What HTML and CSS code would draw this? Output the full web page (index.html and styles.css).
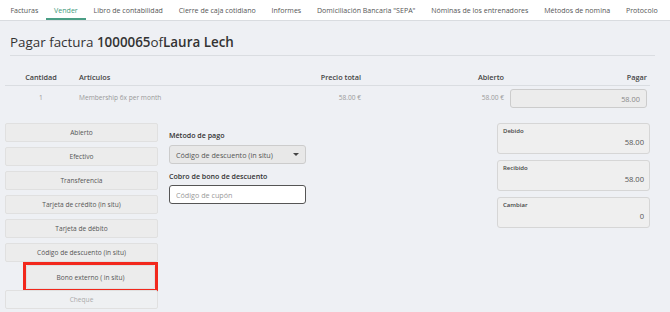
FILE: index.html
```
<!DOCTYPE html>
<html lang="es">
<head>
    <meta charset="UTF-8">
    <meta name="viewport" content="width=device-width, initial-scale=1.0">
    <title>Pagar factura</title>
    <link rel="stylesheet" href="styles.css">
</head>
<body>
    <nav class="tabs">
        <a class="tab">Facturas</a>
        <a class="tab active">Vender</a>
        <a class="tab">Libro de contabilidad</a>
        <a class="tab">Cierre de caja cotidiano</a>
        <a class="tab">Informes</a>
        <a class="tab">Domiciliación Bancaria "SEPA"</a>
        <a class="tab">Nóminas de los entrenadores</a>
        <a class="tab">Métodos de nomina</a>
        <a class="tab">Protocolo</a>
    </nav>

    <div class="page">
        <h1 class="title">Pagar factura <b>1000065</b>of<b>Laura Lech</b></h1>

        <div class="items">
            <div class="row head">
                <div class="c-qty">Cantidad</div>
                <div class="c-name">Artículos</div>
                <div class="c-num">Precio total</div>
                <div class="c-num">Abierto</div>
                <div class="c-num">Pagar</div>
            </div>
            <div class="row">
                <div class="c-qty">1</div>
                <div class="c-name">Membership 6x per month</div>
                <div class="c-num">58.00 €</div>
                <div class="c-num">58.00 €</div>
                <div class="c-pay"><input class="pay-input" type="text" value="58.00" disabled></div>
            </div>
        </div>

        <div class="payment">
            <div class="methods">
                <button class="method">Abierto</button>
                <button class="method">Efectivo</button>
                <button class="method">Transferencia</button>
                <button class="method">Tarjeta de crédito (in situ)</button>
                <button class="method">Tarjeta de débito</button>
                <button class="method">Código de descuento (in situ)</button>
                <div class="highlight">
                    <button class="method">Bono externo ( in situ)</button>
                </div>
                <button class="method faded">Cheque</button>
            </div>

            <div class="form">
                <label class="label">Método de pago</label>
                <div class="select">
                    <span>Código de descuento (in situ)</span>
                    <span class="caret"></span>
                </div>
                <label class="label">Cobro de bono de descuento</label>
                <input class="coupon" type="text" placeholder="Código de cupón">
            </div>

            <div class="totals">
                <div class="total">
                    <span class="total-label">Debido</span>
                    <span class="total-value">58.00</span>
                </div>
                <div class="total">
                    <span class="total-label">Recibido</span>
                    <span class="total-value">58.00</span>
                </div>
                <div class="total">
                    <span class="total-label">Cambiar</span>
                    <span class="total-value">0</span>
                </div>
            </div>
        </div>
    </div>
</body>
</html>
```

FILE: styles.css
```
body {
    margin: 0;
    font-family: "Open Sans", Arial, sans-serif;
    background-color: #eef0f4;
    color: #555;
}

/* Top tabs */
.tabs {
    display: flex;
    height: 20px;
    padding-left: 2.5px;
    background-color: #fff;
    border-bottom: 1px solid #d9dce0;
    overflow: hidden;
}

.tab {
    padding: 0 7.9px;
    font-size: 7.05px;
    line-height: 20px;
    color: #555;
    white-space: nowrap;
}

.tab.active {
    color: #3f9a7c;
    box-shadow: inset 0 -2px 0 #4a9e85;
}

/* Page */
.page {
    width: 645px;
    padding: 0 5px;
}

.title {
    margin: 0 -5px 0 5px;
    padding: 13px 0 5px;
    font-size: 13.4px;
    font-weight: 400;
    line-height: 16px;
    color: #333;
    border-bottom: 1px solid #dadde1;
}

.title b {
    font-weight: 600;
}

/* Items table */
.items {
    margin-top: 12px;
}

.row {
    display: grid;
    grid-template-columns: 72px 147px 140px 143px 143px;
    align-items: center;
    font-size: 6.6px;
    color: #999;
    height: 22px;
}

.row.head {
    height: 17px;
    font-size: 7.3px;
    font-weight: 600;
    color: #444;
    border-bottom: 1px solid #dadde1;
}

.c-qty {
    text-align: center;
}

.c-name {
    padding-left: 2px;
}

.c-num {
    text-align: right;
    padding-right: 3px;
}

.c-pay {
    padding-left: 3px;
    padding-right: 3px;
}

.pay-input {
    box-sizing: border-box;
    width: 137px;
    height: 19px;
    margin-top: 3px;
    padding: 0 6px;
    font-family: inherit;
    font-size: 7.4px;
    color: #888;
    text-align: right;
    background-color: #ececec;
    border: 1px solid #ccc;
    border-radius: 3px;
}

/* Payment area */
.payment {
    display: flex;
    margin-top: 15px;
}

.methods {
    display: flex;
    flex-direction: column;
    gap: 5px;
    width: 153px;
}

.method {
    height: 19px;
    font-family: inherit;
    font-size: 6.6px;
    color: #555;
    background-color: #ececec;
    border: 1px solid #e0e0e0;
    border-radius: 2px;
    padding: 0;
}

.method.faded {
    color: #aaa;
    background-color: #eef0f2;
}

.highlight {
    display: flex;
    margin: -5px 0 -7px 18px;
    border: 3px solid #f2281c;
    height: 24px;
}

.highlight .method {
    flex: 1;
    height: 24px;
}

.form {
    display: flex;
    flex-direction: column;
    width: 137px;
    margin-left: 11px;
}

.label {
    font-size: 7.1px;
    font-weight: 600;
    color: #333;
    margin-top: 7px;
    height: 15px;
}

.label + .coupon {
    margin-top: -1px;
}

.select {
    display: flex;
    align-items: center;
    justify-content: space-between;
    box-sizing: border-box;
    height: 19px;
    padding: 0 6px;
    font-size: 7.2px;
    color: #555;
    background-color: #e8e8e8;
    border: 1px solid #ccc;
    border-radius: 3px;
}

.caret {
    width: 0;
    height: 0;
    border-left: 3px solid transparent;
    border-right: 3px solid transparent;
    border-top: 3px solid #444;
}

.coupon {
    box-sizing: border-box;
    height: 19px;
    padding: 0 6px;
    font-family: inherit;
    font-size: 7.2px;
    background-color: #fff;
    border: 1px solid #555;
    border-radius: 3px;
}

.coupon::placeholder {
    color: #999;
}

.totals {
    display: flex;
    flex-direction: column;
    gap: 6px;
    width: 153px;
    margin-left: auto;
}

.total {
    display: flex;
    flex-direction: column;
    box-sizing: border-box;
    height: 31px;
    padding: 3px 5px;
    background-color: #efefef;
    border: 1px solid #d6d6d6;
    border-radius: 3px;
}

.total-label {
    font-size: 6px;
    font-weight: 600;
    color: #444;
}

.total-value {
    margin-top: 2px;
    text-align: right;
    font-size: 7.6px;
    color: #555;
}
```
